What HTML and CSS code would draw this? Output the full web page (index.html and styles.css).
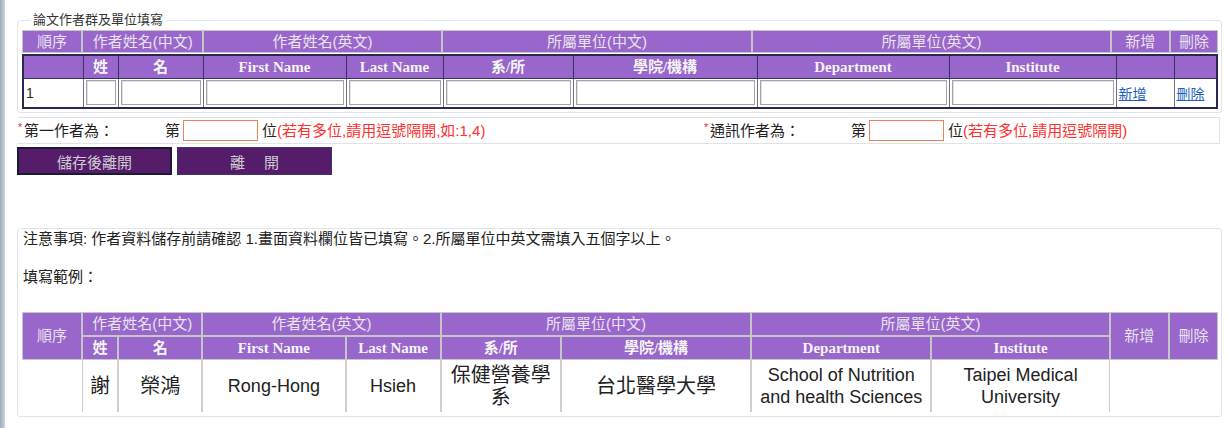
FILE: index.html
```html
<!DOCTYPE html>
<html lang="zh-Hant">
<head>
    <meta charset="UTF-8">
    <meta name="viewport" content="width=device-width, initial-scale=1.0">
    <title>論文作者群及單位填寫</title>
    <link rel="stylesheet" href="styles.css">
</head>
<body>
    <div class="frame-edge"></div>

    <div class="page">
        <fieldset class="author-box">
            <legend>論文作者群及單位填寫</legend>

            <!-- group headings -->
            <table class="head-grid">
                <colgroup>
                    <col class="w60"><col class="w121"><col class="w238"><col class="w310"><col class="w358"><col class="w59"><col class="w48">
                </colgroup>
                <tr>
                    <td>順序</td>
                    <td>作者姓名(中文)</td>
                    <td>作者姓名(英文)</td>
                    <td>所屬單位(中文)</td>
                    <td>所屬單位(英文)</td>
                    <td>新增</td>
                    <td>刪除</td>
                </tr>
            </table>

            <!-- field headings + input row -->
            <table class="fill-grid">
                <colgroup>
                    <col class="w60"><col class="w35"><col class="w85"><col class="w143"><col class="w97"><col class="w130"><col class="w184"><col class="w192"><col class="w167"><col class="w58"><col class="w43">
                </colgroup>
                <tr class="sub-head">
                    <td></td>
                    <td>姓</td>
                    <td>名</td>
                    <td>First Name</td>
                    <td>Last Name</td>
                    <td>系/所</td>
                    <td>學院/機構</td>
                    <td>Department</td>
                    <td>Institute</td>
                    <td></td>
                    <td></td>
                </tr>
                <tr class="input-row">
                    <td class="seq">1</td>
                    <td><input type="text"></td>
                    <td><input type="text"></td>
                    <td><input type="text"></td>
                    <td><input type="text"></td>
                    <td><input type="text"></td>
                    <td><input type="text"></td>
                    <td><input type="text"></td>
                    <td><input type="text"></td>
                    <td><a href="#">新增</a></td>
                    <td><a href="#">刪除</a></td>
                </tr>
            </table>
        </fieldset>

        <div class="order-row">
            <div class="order-item">
                <span class="req">*</span>
                <span class="order-label">第一作者為：</span>
                <span>第</span>
                <input type="text" class="order-input">
                <span class="order-hint">位<span class="red">(若有多位,請用逗號隔開,如:1,4)</span></span>
            </div>
            <div class="order-item">
                <span class="req">*</span>
                <span class="order-label">通訊作者為：</span>
                <span>第</span>
                <input type="text" class="order-input">
                <span class="order-hint">位<span class="red">(若有多位,請用逗號隔開)</span></span>
            </div>
        </div>

        <div class="actions">
            <button class="btn btn-main">儲存後離開</button>
            <button class="btn">離　 開</button>
        </div>

        <div class="notes">
            <p>注意事項: 作者資料儲存前請確認 1.畫面資料欄位皆已填寫。2.所屬單位中英文需填入五個字以上。</p>
            <p class="example-title">填寫範例：</p>

            <table class="example-grid">
                <colgroup>
                    <col class="w60"><col class="w36"><col class="w84"><col class="w143"><col class="w95"><col class="w120"><col class="w190"><col class="w180"><col class="w178"><col class="w59"><col class="w49">
                </colgroup>
                <tr class="group-row">
                    <td rowspan="2">順序</td>
                    <td colspan="2">作者姓名(中文)</td>
                    <td colspan="2">作者姓名(英文)</td>
                    <td colspan="2">所屬單位(中文)</td>
                    <td colspan="2">所屬單位(英文)</td>
                    <td rowspan="2">新增</td>
                    <td rowspan="2">刪除</td>
                </tr>
                <tr class="sub-head">
                    <td>姓</td>
                    <td>名</td>
                    <td>First Name</td>
                    <td>Last Name</td>
                    <td>系/所</td>
                    <td>學院/機構</td>
                    <td>Department</td>
                    <td>Institute</td>
                </tr>
                <tr class="ex-row">
                    <td class="blank"></td>
                    <td>謝</td>
                    <td>榮鴻</td>
                    <td class="en">Rong-Hong</td>
                    <td class="en">Hsieh</td>
                    <td>保健營養學系</td>
                    <td>台北醫學大學</td>
                    <td class="en">School of Nutrition and health Sciences</td>
                    <td class="en">Taipei Medical University</td>
                    <td class="blank"></td>
                    <td class="blank"></td>
                </tr>
            </table>
        </div>
    </div>
</body>
</html>
```

FILE: styles.css
```css
body {
    margin: 0;
    min-height: 100vh;
    display: flex;
    font-family: "Liberation Sans", "Noto Sans CJK TC", sans-serif;
    color: #222;
    background: #fff;
}
.frame-edge {
    flex: none;
    width: 5px;
    background: linear-gradient(to right, #9ea9bc, #cfd7e3);
}
.page {
    flex: 1;
    padding: 12px 10px 0 12px;
}

/* column widths */
.w35 { width: 35px; }
.w36 { width: 36px; }
.w43 { width: 43px; }
.w48 { width: 48px; }
.w49 { width: 49px; }
.w58 { width: 58px; }
.w59 { width: 59px; }
.w60 { width: 60px; }
.w84 { width: 84px; }
.w85 { width: 85px; }
.w95 { width: 95px; }
.w97 { width: 97px; }
.w120 { width: 120px; }
.w121 { width: 121px; }
.w130 { width: 130px; }
.w143 { width: 143px; }
.w167 { width: 167px; }
.w178 { width: 178px; }
.w180 { width: 180px; }
.w184 { width: 184px; }
.w190 { width: 190px; }
.w192 { width: 192px; }
.w238 { width: 238px; }
.w310 { width: 310px; }
.w358 { width: 358px; }

table {
    width: 100%;
    table-layout: fixed;
}
td {
    padding: 0;
    text-align: center;
}

.author-box {
    margin: 0;
    padding: 2px 3px 3px 4px;
    border: 1px solid #dfe5ec;
    border-radius: 3px;
}
.author-box legend {
    margin-left: 8px;
    padding: 0 3px;
    font-size: 13px;
    line-height: 16px;
    color: #333;
}

.head-grid,
.example-grid {
    border-collapse: separate;
    border-spacing: 0;
}
.head-grid tr {
    height: 23px;
}
.head-grid td,
.example-grid .group-row td {
    background: #9966cc;
    border: 1px solid #c6c6c6;
    color: #e8e3ee;
    font-size: 15px;
    line-height: 20px;
}

.fill-grid {
    margin-top: 1px;
    border-collapse: collapse;
    border: 2px solid #2b2750;
}
.fill-grid td {
    border: 1px solid #3a3168;
}
.sub-head td {
    background: #9966cc;
    color: #f4f4f4;
    font-family: "Liberation Serif", "Noto Sans CJK TC", serif;
    font-weight: bold;
    font-size: 15px;
    line-height: 20px;
}
.fill-grid .sub-head {
    height: 23px;
}
.input-row {
    height: 30px;
}
.input-row td {
    border-color: #707088;
}
.input-row .seq {
    text-align: left;
    padding-left: 2px;
    font-size: 14px;
    color: #3a2a20;
}
.input-row input {
    display: block;
    box-sizing: border-box;
    width: calc(100% - 4px);
    height: 25px;
    margin: 0 auto;
    border: 1px solid #a4a4a4;
    box-shadow: inset 1px 1px 0 #e2e2e2;
}
.input-row a {
    display: block;
    text-align: left;
    padding-left: 2px;
    font-size: 14px;
    color: #1f5fbf;
}

.order-row {
    display: grid;
    grid-template-columns: 686px 1fr;
    align-items: center;
    height: 25px;
    margin: 4px 2px 0 0;
    border: 1px solid #dfe3e8;
    border-left-color: transparent;
    font-size: 15px;
    line-height: 20px;
}
.order-item {
    display: flex;
    align-items: center;
    white-space: nowrap;
}
.req {
    width: 6px;
    align-self: flex-start;
    font-size: 11px;
    line-height: 14px;
    color: #e03030;
}
.order-label {
    width: 141px;
}
.order-input {
    box-sizing: border-box;
    width: 75px;
    height: 21px;
    margin: 0 4px 0 3px;
    border: 1px solid #e8845c;
}
.red {
    color: #ff3030;
}

.actions {
    display: flex;
    gap: 5px;
    margin-top: 3px;
}
.btn {
    width: 155px;
    height: 28px;
    padding: 0;
    background: #551d69;
    border: 1px solid #3d3574;
    color: #cfcbd4;
    font-family: inherit;
    font-size: 15px;
}
.btn-main {
    border: 2px solid #1d1a38;
}

.notes {
    margin-top: 53px;
    padding: 1px 3px 4px 4px;
    border: 1px solid #dfe5ec;
    border-radius: 3px;
}
.notes p {
    margin: 0 0 0 1px;
    font-size: 15px;
    line-height: 18px;
}
.notes .example-title {
    margin-top: 20px;
}

.example-grid {
    margin-top: 26px;
}
.example-grid .group-row {
    height: 24px;
}
.example-grid .sub-head {
    height: 24px;
}
.example-grid .sub-head td {
    border: 1px solid #c6c6c6;
}
.ex-row {
    height: 52px;
}
.ex-row td {
    border-left: 1px solid #cfcfcf;
    border-right: 1px solid #cfcfcf;
    font-size: 20px;
    line-height: 22px;
    color: #222;
}
.ex-row .en {
    font-size: 18px;
}
.ex-row .blank {
    border: none;
}
```
